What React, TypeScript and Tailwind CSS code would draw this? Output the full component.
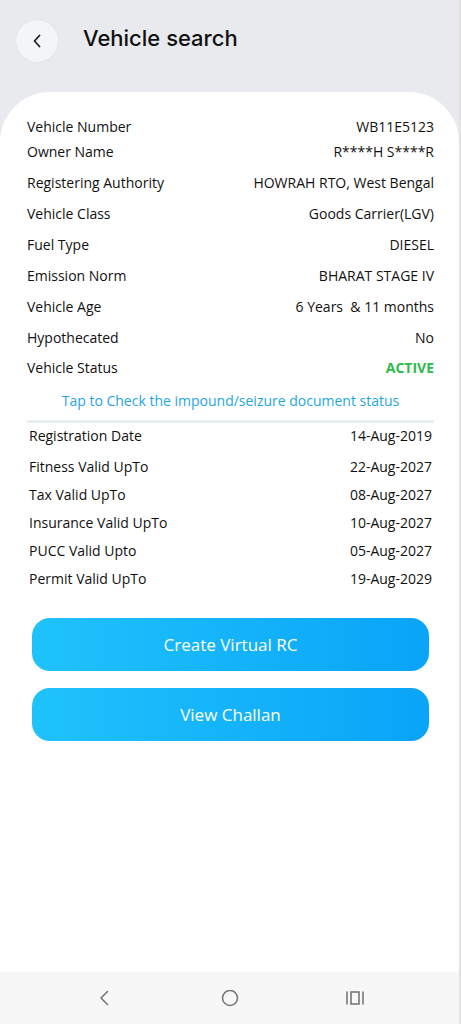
import React from "react";

const top = [
  ["Vehicle Number", "WB11E5123"],
  ["Owner Name", "R****H S****R"],
  ["Registering Authority", "HOWRAH RTO, West Bengal"],
  ["Vehicle Class", "Goods Carrier(LGV)"],
  ["Fuel Type", "DIESEL"],
  ["Emission Norm", "BHARAT STAGE IV"],
  ["Vehicle Age", "6 Years  & 11 months"],
  ["Hypothecated", "No"],
];

const dates = [
  ["Registration Date", "14-Aug-2019"],
  ["Fitness Valid UpTo", "22-Aug-2027"],
  ["Tax Valid UpTo", "08-Aug-2027"],
  ["Insurance Valid UpTo", "10-Aug-2027"],
  ["PUCC Valid Upto", "05-Aug-2027"],
  ["Permit Valid UpTo", "19-Aug-2029"],
];

export default function App() {
  return (
    <div
      className="w-[461px] min-h-[1024px] flex flex-col bg-[#e8eaed] border-r-2 border-[#e2e2e2] text-[#111]"
      style={{ fontFamily: '"Open Sans", "Noto Sans", sans-serif' }}
    >
      {/* Header */}
      <div className="h-[92px] flex items-start pt-[20px] pl-[16px]">
        <div className="w-[42px] h-[42px] rounded-full bg-[#f3f5f7] shadow-[0_0_2px_rgba(0,0,0,0.06)] flex items-center justify-center">
          <svg width="10" height="14" viewBox="0 0 10 14" fill="none">
            <path d="M7.5 1.5 L2.5 7 L7.5 12.5" stroke="#1f1f1f" strokeWidth="1.8" strokeLinecap="round" strokeLinejoin="round" />
          </svg>
        </div>
        <div
          className="ml-[25px] mt-[4px] text-[22px] leading-[28px] font-medium text-[#111]"
          style={{ fontFamily: 'Inter, "Noto Sans", sans-serif' }}
        >
          Vehicle search
        </div>
      </div>

      {/* Card */}
      <div className="flex-1 bg-white rounded-t-[50px] pl-[27px] pr-[25px] pt-[25px] text-[14px]">
        {top.map(([l, v], i) => (
          <div
            key={l}
            className={`flex justify-between items-center h-[20px] leading-[20px] ${i === 0 ? "" : i === 1 ? "mt-[5px]" : "mt-[11px]"}`}
          >
            <span>{l}</span>
            <span className="whitespace-pre">{v}</span>
          </div>
        ))}
        <div className="flex justify-between items-center h-[20px] leading-[20px] mt-[10px]">
          <span>Vehicle Status</span>
          <span className="font-bold text-[#2dbb4e]">ACTIVE</span>
        </div>
        <div className="mt-[13px] h-[20px] leading-[20px] text-center text-[#1fa6e2]">
          Tap to Check the impound/seizure document status
        </div>
        <div className="mt-[9px] h-[3px] bg-[#e9eef1]" />
        <div className="px-[2px]">
          {dates.map(([l, v], i) => (
            <div
              key={l}
              className={`flex justify-between items-center h-[20px] leading-[20px] ${i === 0 ? "mt-[3px]" : i === 1 ? "mt-[11px]" : "mt-[8px]"}`}
            >
              <span>{l}</span>
              <span>{v}</span>
            </div>
          ))}
        </div>

        <div className="mt-[29px] mx-[5px] flex flex-col gap-[17px]">
          <button className="h-[53px] rounded-[18px] bg-gradient-to-r from-[#1fc3fb] to-[#0aa4f8] text-white text-[17px] font-medium">
            Create Virtual RC
          </button>
          <button className="h-[53px] rounded-[18px] bg-gradient-to-r from-[#1fc3fb] to-[#0aa4f8] text-white text-[17px] font-medium">
            View Challan
          </button>
        </div>
      </div>

      {/* Nav bar */}
      <div className="h-[52px] bg-[#f7f7f7] flex items-start pt-[18px]">
        <div className="w-full relative h-[16px]">
          <svg className="absolute left-[98px] top-0" width="12" height="16" viewBox="0 0 12 16" fill="none">
            <path d="M9.5 1.5 L3 8 L9.5 14.5" stroke="#777" strokeWidth="1.6" strokeLinecap="round" strokeLinejoin="round" />
          </svg>
          <svg className="absolute left-[221px] top-0" width="18" height="18" viewBox="0 0 18 18" fill="none">
            <circle cx="9" cy="8" r="7.5" stroke="#777" strokeWidth="1.6" />
          </svg>
          <svg className="absolute left-[346px] top-[1px]" width="18" height="14" viewBox="0 0 18 14" fill="none">
            <path d="M1 0.5 V13.5" stroke="#777" strokeWidth="1.6" />
            <path d="M17 0.5 V13.5" stroke="#777" strokeWidth="1.6" />
            <rect x="5" y="1" width="8" height="12" stroke="#777" strokeWidth="1.6" />
          </svg>
        </div>
      </div>
    </div>
  );
}
